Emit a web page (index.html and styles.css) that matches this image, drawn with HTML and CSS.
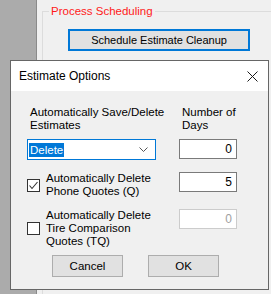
FILE: index.html
```html
<!DOCTYPE html>
<html lang="en">
<head>
    <meta charset="UTF-8">
    <title>Estimate Options</title>
    <link rel="stylesheet" href="styles.css">
</head>
<body>
    <div class="screen">
        <div class="side-strip"></div>
        <div class="main-area">
            <fieldset class="group-box">
                <legend>Process Scheduling</legend>
                <button class="win-btn focused">Schedule Estimate Cleanup</button>
            </fieldset>
        </div>

        <!-- modal window on top of the settings page -->
        <div class="dialog">
            <div class="title-bar">
                <span>Estimate Options</span>
                <svg class="close-icon" width="11" height="11" viewBox="0 0 11 11">
                    <path d="M0.5 0.5 L10.5 10.5 M10.5 0.5 L0.5 10.5" stroke="#1a1a1a" stroke-width="1" fill="none"/>
                </svg>
            </div>
            <div class="dialog-body">
                <div class="row header-row">
                    <div class="col-left">Automatically Save/Delete<br>Estimates</div>
                    <div class="col-right">Number of<br>Days</div>
                </div>
                <div class="row combo-row">
                    <div class="combo">
                        <span class="selected-text">Delete</span>
                        <svg class="chevron" width="9" height="5" viewBox="0 0 9 5">
                            <path d="M0.5 0.5 L4.5 4.5 L8.5 0.5" stroke="#555" stroke-width="1" fill="none"/>
                        </svg>
                    </div>
                    <div class="num-box">0</div>
                </div>
                <div class="row check-row">
                    <div class="col-left check-item">
                        <span class="checkbox checked">
                            <svg width="11" height="11" viewBox="0 0 11 11">
                                <path d="M1.5 5.5 L4 8.5 L9.5 2" stroke="#333" stroke-width="1.1" fill="none"/>
                            </svg>
                        </span>
                        <span class="check-label">Automatically Delete<br>Phone Quotes (Q)</span>
                    </div>
                    <div class="num-box">5</div>
                </div>
                <div class="row check-row tire-row">
                    <div class="col-left check-item">
                        <span class="checkbox"></span>
                        <span class="check-label">Automatically Delete<br>Tire Comparison<br>Quotes (TQ)</span>
                    </div>
                    <div class="num-box disabled">0</div>
                </div>
                <div class="button-row">
                    <button class="win-btn dialog-btn">Cancel</button>
                    <button class="win-btn dialog-btn">OK</button>
                </div>
            </div>
        </div>
    </div>
</body>
</html>
```

FILE: styles.css
```css
* {
    margin: 0;
    padding: 0;
    box-sizing: border-box;
}
body {
    font-family: 'Liberation Sans', Arial, sans-serif;
    font-size: 11.5px;
    color: #000;
    background: #f0f0f0;
    overflow: hidden;
}
.screen {
    width: 271px;
    height: 294px;
    display: flex;
    position: relative;
}
.side-strip {
    width: 37px;
    background: #ababab;
    border-right: 1px solid #8a8a8a;
}
.main-area {
    flex: 1;
    padding: 5px 0 0 5px;
}
.group-box {
    border: 1px solid #dcdcdc;
    border-right: none;
    height: 300px;
    padding: 12px 0 0 0;
}
.group-box legend {
    color: #ff1a1a;
    font-size: 11.5px;
    margin-left: 6px;
    padding: 0 2px;
}
.win-btn {
    font-family: inherit;
    font-size: 11.5px;
    color: #000;
    background: #e1e1e1;
    border: 1px solid #adadad;
}
.win-btn.focused {
    width: 182px;
    height: 22px;
    margin-left: 25px;
    font-size: 11px;
    border: 2px solid #0078d7;
}

/* dialog */
.dialog {
    position: absolute;
    left: 10px;
    top: 60px;
    width: 259px;
    height: 230px;
    border: 1px solid #666;
    background: #f0f0f0;
}
.title-bar {
    height: 30px;
    background: #fff;
    display: flex;
    align-items: center;
    justify-content: space-between;
    padding: 0 10px 0 8px;
    font-size: 12px;
}
.dialog-body {
    padding: 15px 0 0 16px;
}
.row {
    display: flex;
    gap: 23px;
}
.col-left {
    width: 129px;
}
.col-right {
    width: 58px;
}
.header-row {
    line-height: 13px;
    height: 26px;
    white-space: nowrap;
}
.header-row .col-left {
    padding-left: 3px;
}
.header-row .col-right {
    padding-left: 3px;
}
.combo-row {
    margin-top: 7px;
}
.combo {
    width: 129px;
    height: 21px;
    background: #fff;
    border: 1px solid #0078d7;
    display: flex;
    align-items: center;
    justify-content: space-between;
    padding: 0 7px 0 1px;
}
.selected-text {
    background: #0078d7;
    color: #fff;
    padding: 1px 1px;
    line-height: 12px;
}
.num-box {
    width: 58px;
    height: 20px;
    background: #fff;
    border: 1px solid #7a7a7a;
    text-align: right;
    padding-right: 4px;
    line-height: 18px;
    font-size: 12px;
}
.num-box.disabled {
    border-color: #cccccc;
    color: #a0a0a0;
}
.check-row {
    margin-top: 12px;
}
.tire-row {
    margin-top: 11px;
}
.check-item {
    display: flex;
    align-items: center;
    gap: 6px;
    line-height: 13px;
    white-space: nowrap;
}
.checkbox {
    width: 13px;
    height: 13px;
    flex-shrink: 0;
    border: 1px solid #333;
    background: #fff;
    display: flex;
    align-items: center;
    justify-content: center;
}
.button-row {
    display: flex;
    gap: 25px;
    padding-left: 25px;
    margin-top: 7px;
}
.dialog-btn {
    width: 71px;
    height: 22px;
}
```
